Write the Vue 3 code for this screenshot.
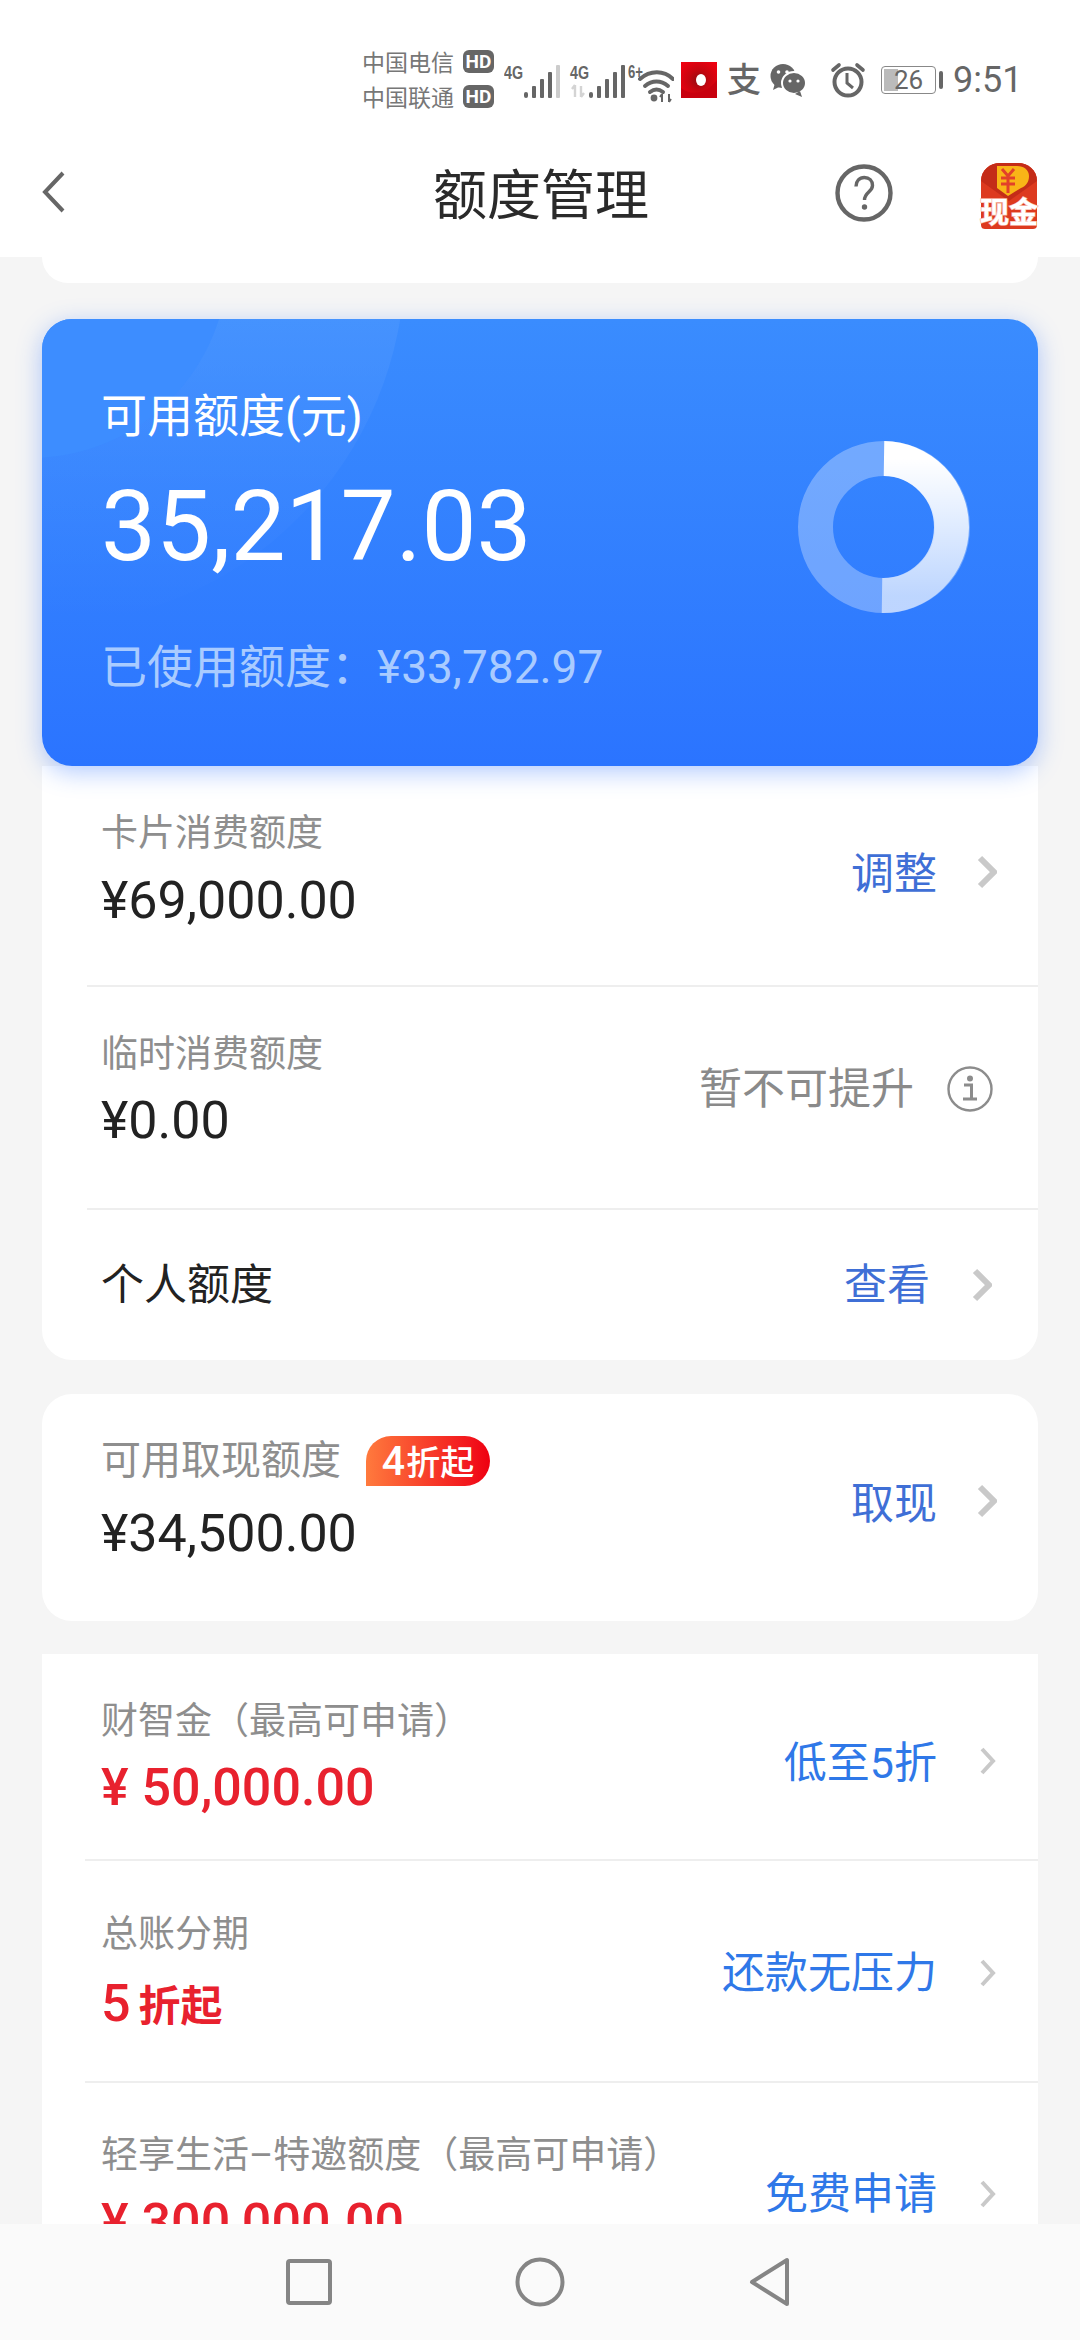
<script setup>
const rows = [
  { label: '卡片消费额度', value: '¥69,000.00', link: '调整', cls: 'r-a' },
  { label: '临时消费额度', value: '¥0.00', note: '暂不可提升', cls: 'r-b' },
]
const offers = [
  { label: '财智金（最高可申请）', value: '¥ 50,000.00', link: '低至5折', cls: 'o-a' },
  { label: '总账分期', value: '5', unit: '折起', link: '还款无压力', cls: 'o-b' },
  { label: '轻享生活–特邀额度（最高可申请）', value: '¥ 300,000.00', link: '免费申请', cls: 'o-c' },
]
</script>

<template>
  <div class="screen">
    <div class="status">
      <div class="carriers">
        <div class="carrier"><span>中国电信</span><b>HD</b></div>
        <div class="carrier"><span>中国联通</span><b>HD</b></div>
      </div>
      <svg class="signals" width="170" height="46" viewBox="0 0 170 46">
        <text x="0" y="21" class="tiny" textLength="19" lengthAdjust="spacingAndGlyphs">4G</text>
        <g fill="#666">
          <rect x="20" y="34" width="4" height="6" rx="2" />
          <rect x="28" y="28" width="4" height="12" rx="1" />
          <rect x="36" y="21" width="4" height="19" rx="1" />
          <rect x="44" y="14" width="4" height="26" rx="1" />
        </g>
        <rect x="52" y="7" width="4" height="33" rx="1" fill="#ccc" />
        <text x="66" y="21" class="tiny" textLength="19" lengthAdjust="spacingAndGlyphs">4G</text>
        <path d="M71 27v12M71 27l-3 4M77 39V28M77 39l3-4" stroke="#d4d4d4" stroke-width="2.4" fill="none" />
        <g fill="#666">
          <rect x="85" y="34" width="4" height="6" rx="2" />
          <rect x="93" y="28" width="4" height="12" rx="1" />
          <rect x="101" y="21" width="4" height="19" rx="1" />
          <rect x="109" y="14" width="4" height="26" rx="1" />
          <rect x="117" y="7" width="4" height="33" rx="1" />
        </g>
        <text x="124" y="20" class="tiny" textLength="15" lengthAdjust="spacingAndGlyphs">6+</text>
        <g fill="none" stroke="#666" stroke-width="4" stroke-linecap="round">
          <path d="M136 21c10-9 24-9 33 0" />
          <path d="M141 28c7-6 16-6 23 0" />
          <path d="M146 34c4-3 9-3 13 0" />
        </g>
        <circle cx="150" cy="40" r="3.4" fill="#666" />
        <path d="M158 36v8M158 36l-2 3M165 44v-8M165 44l2-3" stroke="#666" stroke-width="2" fill="none" />
      </svg>
      <svg class="app-red" width="36" height="36" viewBox="0 0 36 36">
        <defs>
          <radialGradient id="redg" cx="50%" cy="50%" r="62%">
            <stop offset="0" stop-color="#8e0d12" />
            <stop offset=".45" stop-color="#c6050f" />
            <stop offset="1" stop-color="#ee0010" />
          </radialGradient>
        </defs>
        <rect width="36" height="36" fill="url(#redg)" />
        <path d="M0 26c10 8 26 6 36-8v18H0z" fill="#c8000e" />
        <ellipse cx="20" cy="18" rx="5" ry="6" fill="#fff" />
      </svg>
      <span class="ali">支</span>
      <svg class="wechat" width="36" height="34" viewBox="0 0 36 34">
        <ellipse cx="13" cy="13" rx="12.5" ry="12" fill="#666" />
        <path d="M5 20l-2 7 8-4z" fill="#666" />
        <ellipse cx="24" cy="20" rx="12" ry="11" fill="#666" stroke="#fff" stroke-width="2" />
        <path d="M30 28l2 6-7-3z" fill="#666" />
        <circle cx="8.5" cy="9" r="1.8" fill="#fff" />
        <circle cx="17" cy="9" r="1.8" fill="#fff" />
        <circle cx="20" cy="18" r="1.6" fill="#fff" />
        <circle cx="28" cy="18" r="1.6" fill="#fff" />
      </svg>
      <svg class="alarm" width="36" height="36" viewBox="0 0 36 36">
        <circle cx="18" cy="20" r="13.5" fill="none" stroke="#666" stroke-width="4" />
        <path d="M17 11v10l6 5" fill="none" stroke="#666" stroke-width="3" />
        <path d="M3 8l6-5M33 8l-6-5" stroke="#666" stroke-width="3.6" stroke-linecap="round" />
      </svg>
      <div class="battery">
        <div class="battery-body"><i></i><span>26</span></div>
        <div class="battery-nub"></div>
      </div>
      <span class="clock">9:51</span>
    </div>

    <header class="header">
      <svg class="back" width="24" height="42" viewBox="0 0 24 42">
        <path d="M21 2L3 21l18 19" fill="none" stroke="#666" stroke-width="4" />
      </svg>
      <h1 class="title">额度管理</h1>
      <div class="header-actions">
        <svg width="58" height="58" viewBox="0 0 58 58">
          <circle cx="29" cy="29" r="26.5" fill="none" stroke="#666" stroke-width="4.4" />
          <path d="M21 22.500c0-5.500 3.500-9 8.300-9 5 0 8.200 3.400 8.200 8 0 6.500-8 6.800-8 14.500" fill="none" stroke="#666" stroke-width="3.400" />
          <circle cx="29.500" cy="43" r="2.700" fill="#666" />
        </svg>
        <svg class="packet" width="62" height="72" viewBox="0 0 62 72">
          <path d="M3 18C3 7 12 0 22 0h18c10 0 19 7 19 18v44c0 3-2 4-4 4H7c-2 0-4-1-4-4z" fill="#dd3a1f" />
          <path d="M3 18C3 7 12 0 22 0h18c10 0 19 7 19 18L31 38 3 18z" fill="#c42c18" />
          <path d="M19 3h20c7 0 12 4 12 10 0 6-3 10-8 12l-13 8-11-8z" fill="#f9b417" />
          <path d="M24 6l6 7 6-7M30 13v17M23 15h14M23 21h14" fill="none" stroke="#e2402a" stroke-width="3" />
          <text x="31" y="60" class="cash">现金</text>
        </svg>
      </div>
    </header>

    <main class="content">
      <div class="top-stub"></div>

      <section class="quota">
        <svg class="quota-arcs" width="420" height="320" viewBox="0 0 420 320">
          <defs>
            <linearGradient id="arcg" x1="0" y1="0" x2="0" y2="1">
              <stop offset="0" stop-color="#fff" stop-opacity=".2" />
              <stop offset=".5" stop-color="#fff" stop-opacity=".07" />
              <stop offset="1" stop-color="#fff" stop-opacity="0" />
            </linearGradient>
          </defs>
          <circle cx="-2" cy="-59" r="365" fill="url(#arcg)" />
          <circle cx="-12" cy="-59" r="198" fill="#3d8dff" />
        </svg>
        <div class="quota-text">
          <div class="quota-label">可用额度(元)</div>
          <div class="quota-amount">35,217.03</div>
          <div class="quota-used">已使用额度：¥33,782.97</div>
        </div>
        <svg class="donut" width="176" height="176" viewBox="0 0 176 176">
          <defs>
            <linearGradient id="dg" x1="0" y1="0" x2="0" y2="1">
              <stop offset="0" stop-color="#fff" />
              <stop offset="1" stop-color="#fff" stop-opacity=".55" />
            </linearGradient>
          </defs>
          <circle cx="88" cy="88" r="68.500" fill="none" stroke="#fff" stroke-opacity=".3" stroke-width="35" />
          <path d="M88 19.500a68.500 68.500 0 0 1-2 137" fill="none" stroke="url(#dg)" stroke-width="35" />
        </svg>
      </section>

      <section class="card card-main">
        <template v-for="row in rows" :key="row.label">
          <div class="row" :class="row.cls">
            <div class="left">
              <div class="label">{{ row.label }}</div>
              <div class="value">{{ row.value }}</div>
            </div>
            <div class="right">
              <template v-if="row.link">
                <span class="link">{{ row.link }}</span>
                <svg class="chev" width="20" height="34" viewBox="0 0 20 34"><path d="M3 3l14 14L3 31" /></svg>
              </template>
              <template v-else>
                <span class="note">{{ row.note }}</span>
                <svg class="info" width="46" height="46" viewBox="0 0 46 46">
                  <circle cx="23" cy="23" r="21.500" fill="none" stroke="#8c8c8c" stroke-width="2.400" />
                  <circle cx="23" cy="12.500" r="3" fill="#8c8c8c" />
                  <path d="M17 19h7.500v13M16 33h14" fill="none" stroke="#8c8c8c" stroke-width="3" />
                </svg>
              </template>
            </div>
          </div>
          <div class="divider"></div>
        </template>
        <div class="row r-c">
          <div class="personal">个人额度</div>
          <div class="right">
            <span class="link">查看</span>
            <svg class="chev" width="20" height="34" viewBox="0 0 20 34"><path d="M3 3l14 14L3 31" /></svg>
          </div>
        </div>
      </section>

      <section class="card card-cash">
        <div class="row r-d">
          <div class="left">
            <div class="label-line">
              <span class="label label-lg">可用取现额度</span>
              <span class="badge"><b>4</b>折起</span>
            </div>
            <div class="value">¥34,500.00</div>
          </div>
          <div class="right">
            <span class="link">取现</span>
            <svg class="chev" width="20" height="34" viewBox="0 0 20 34"><path d="M3 3l14 14L3 31" /></svg>
          </div>
        </div>
      </section>

      <section class="offers">
        <template v-for="(o, i) in offers" :key="o.label">
          <div class="row" :class="o.cls">
            <div class="left">
              <div class="label">{{ o.label }}</div>
              <div class="value red">{{ o.value }}<span v-if="o.unit" class="unit">{{ o.unit }}</span></div>
            </div>
            <div class="right">
              <span class="link link-bright">{{ o.link }}</span>
              <svg class="chev chev-thin" width="20" height="30" viewBox="0 0 20 30"><path d="M5 3l11 12L5 27" /></svg>
            </div>
          </div>
          <div v-if="i < offers.length - 1" class="divider divider-wide"></div>
        </template>
      </section>
    </main>

    <nav class="navbar">
      <svg width="46" height="46" viewBox="0 0 46 46"><rect x="2" y="2" width="42" height="42" rx="2" fill="none" stroke="#858585" stroke-width="4" /></svg>
      <svg width="50" height="50" viewBox="0 0 50 50"><circle cx="25" cy="25" r="22.500" fill="none" stroke="#858585" stroke-width="4" /></svg>
      <svg width="42" height="50" viewBox="0 0 42 50"><path d="M38 3v44L3 25z" fill="none" stroke="#858585" stroke-width="4" stroke-linejoin="round" /></svg>
    </nav>
  </div>
</template>

<style scoped>
.screen {
  width: 1080px;
  height: 2340px;
  display: flex;
  flex-direction: column;
  overflow: hidden;
  background: #f5f5f5;
  color: #222;
  font-family: Roboto, "Noto Sans CJK SC", sans-serif;
}

/* status bar */
.status {
  height: 130px;
  box-sizing: border-box;
  padding: 30px 0 0 362px;
  display: flex;
  align-items: center;
  background: #fff;
  color: #666;
  flex: none;
}
.carriers { width: 132px; display: flex; flex-direction: column; gap: 5px; margin-top: -3px; }
.carrier { display: flex; align-items: center; justify-content: space-between; height: 30px; font-size: 23px; color: #777; }
.carrier b {
  width: 31px; height: 23px; border-radius: 6px; background: #666; color: #fff;
  font-size: 19px; line-height: 23px; text-align: center; font-weight: 700;
}
.signals { margin-left: 10px; margin-top: 2px; flex: none; }
.tiny { font-family: "Liberation Sans", sans-serif; font-size: 19px; font-weight: 700; fill: #666; }
.app-red { margin-left: 7px; flex: none; }
.ali { margin-left: 9px; width: 36px; font-size: 34px; line-height: 40px; color: #666; text-align: center; font-weight: 500; }
.wechat { margin-left: 8px; flex: none; }
.alarm { margin-left: 24px; flex: none; }
.battery { margin-left: 15px; display: flex; align-items: center; gap: 3px; }
.battery-body {
  position: relative; width: 55px; height: 28px; box-sizing: border-box;
  border: 1.500px solid #888; border-radius: 4px; text-align: center;
  font-size: 26px; line-height: 26px; color: #666;
}
.battery-body i { position: absolute; left: 2px; top: 2px; bottom: 2px; width: 14px; background: #bbb; }
.battery-body span { position: relative; }
.battery-nub { width: 4px; height: 18px; border-radius: 2px; background: #666; }
.clock { margin-left: 10px; font-size: 36px; color: #666; }

/* header */
.header {
  height: 127px;
  flex: none;
  background: #fff;
  display: grid;
  grid-template-columns: 1fr auto 1fr;
  align-items: center;
  padding: 0 40px 0 42px;
}
.back { display: block; margin-top: -4px; }
.title { margin: -5px 0 0; font-size: 54px; font-weight: 400; color: #2a2a2a; }
.header-actions { display: flex; align-items: center; justify-content: flex-end; gap: 85px; margin-top: -1px; }
.packet { margin-top: 6px; margin-bottom: -6px; }
.cash {
  font-family: "Noto Sans CJK SC", sans-serif; font-size: 29px; font-weight: 700;
  fill: #fff; text-anchor: middle; stroke: #f6b7a8; stroke-width: 1.500px; paint-order: stroke;
}

/* content */
.content { flex: 1; min-height: 0; overflow: hidden; padding: 0 42px; }
.top-stub { height: 26px; background: #fff; border-radius: 0 0 30px 30px; }

.quota {
  position: relative;
  z-index: 1;
  height: 447px;
  margin-top: 36px;
  box-sizing: border-box;
  border-radius: 30px;
  overflow: hidden;
  background: linear-gradient(180deg, #3a8cfe 0%, #2b74ff 100%);
  box-shadow: 0 6px 24px rgba(50, 115, 255, .38);
  color: #fff;
  padding: 0 59px;
  display: flex;
  justify-content: space-between;
}
.quota-arcs { position: absolute; left: 0; top: 0; }
.quota-text { position: relative; }
.quota-label { margin-top: 66px; font-size: 46px; line-height: 62px; }
.quota-amount { margin-top: 24px; font-size: 98px; line-height: 112px; }
.quota-used { margin-top: 53px; font-size: 46px; line-height: 62px; color: #a9cbff; }
.donut { position: relative; margin: 120px 7px 0 0; flex: none; }

.card { background: #fff; border-radius: 30px; }
.card-main { border-radius: 0 0 30px 30px; }
.card-cash { margin-top: 34px; height: 227px; }
.offers { margin-top: 33px; background: #fff; }

.row { display: flex; justify-content: space-between; align-items: flex-start; padding: 0 41px 0 59px; box-sizing: border-box; }
.left { flex: none; }
.right { display: flex; align-items: center; height: 60px; }
.label { font-size: 37px; line-height: 50px; color: #8e8e8e; }
.label-lg { font-size: 40px; }
.value { font-size: 52px; line-height: 60px; color: #222; margin-top: 12px; }
.value.red { font-weight: 500; color: #e8212e; font-size: 52px; }
.unit { margin-left: 8px; font-size: 42px; font-weight: 700; }

.link { font-size: 43px; line-height: 60px; color: #3f6fd6; }
.link-bright { color: #2f78e8; }
.note { font-size: 43px; line-height: 60px; color: #8a8a8a; }
.chev { margin-left: 40px; }
.chev path { fill: none; stroke: #c9c9c9; stroke-width: 6; }
.chev-thin path { stroke-width: 4; }
.info { margin-left: 33px; margin-right: 4px; }

.divider { height: 2px; margin-left: 45px; background: #eeeeee; }
.divider-wide { margin-left: 43px; }

.r-a { height: 219px; padding-top: 43px; }
.r-a .value { margin-top: 12px; }
.r-a .right { margin-top: 35px; }
.r-a .chev { margin-top: -5px; }
.r-b { height: 221px; padding-top: 43px; }
.r-b .value { margin-top: 11px; }
.r-b .right { margin-top: 29px; }
.r-c { height: 150px; align-items: center; padding-right: 46px; }
.r-c .chev { margin-left: 42px; }
.personal { font-size: 43px; line-height: 60px; }

.r-d { padding-top: 42px; }
.r-d .value { margin-top: 18px; }
.r-d .right { margin-top: 38px; }
.r-d .chev { margin-top: -6px; }
.label-line { display: flex; align-items: center; height: 50px; }
.badge {
  margin-left: 25px; width: 124px; height: 50px; text-align: center;
  border-radius: 25px 25px 25px 0;
  background: linear-gradient(90deg, #ff7a3d 0%, #f2141c 85%, #ee0010 100%);
  color: #fff; font-size: 34px; line-height: 50px; font-weight: 500;
}
.badge b { font-size: 41px; font-weight: 500; margin-right: 1px; }

.o-a { height: 205px; padding-top: 43px; }
.o-a .value { margin-top: 11px; }
.o-a .right { margin-top: 36px; }
.o-a .chev { margin-top: -5px; }
.o-b { height: 220px; padding-top: 49px; }
.o-b .value { margin-top: 14px; }
.o-b .right { margin-top: 33px; }
.o-c { height: 220px; padding-top: 48px; }
.o-c .right { margin-top: 33px; }

/* nav */
.navbar {
  height: 116px;
  flex: none;
  background: #fafafa;
  display: flex;
  align-items: center;
  padding: 0 0 0 286px;
}
.navbar svg:nth-child(2) { margin-left: 183px; }
.navbar svg:nth-child(3) { margin-left: 184px; }
</style>
